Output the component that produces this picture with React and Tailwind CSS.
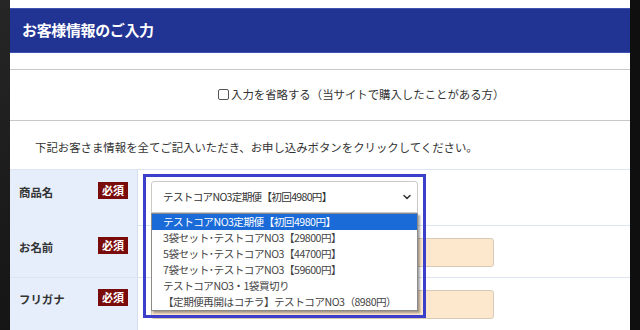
import React from "react";
import { ChevronDown } from "lucide-react";

const options = [
  "テストコアNO3定期便【初回4980円】",
  "3袋セット･テストコアNO3【29800円】",
  "5袋セット･テストコアNO3【44700円】",
  "7袋セット･テストコアNO3【59600円】",
  "テストコアNO3・1袋買切り",
  "【定期便再開はコチラ】テストコアNO3（8980円）",
];

function Badge() {
  return (
    <span className="inline-flex h-[17px] w-[30px] items-center justify-center bg-[#7a0b0b] text-[11px] font-bold leading-none text-white">
      必須
    </span>
  );
}

function LabelCell({ label, pt }) {
  return (
    <div className={`flex h-full items-start justify-between border-r border-[#d4deed] bg-[#e6eefb] pl-[9px] pr-[9px] ${pt}`}>
      <span className="mt-[2px] text-[11.4px] font-bold text-[#333]">{label}</span>
      <Badge />
    </div>
  );
}

function TextInput() {
  return <div className="h-[29px] w-[343px] rounded-[3px] border border-[#d6c9b6] bg-[#fde7cd]" />;
}

export default function App() {
  return (
    <div
      className="flex h-[330px] w-[640px] overflow-hidden bg-[#111]"
      style={{ fontFamily: '"Noto Sans CJK JP", "Noto Sans", sans-serif' }}
    >
      {/* left backdrop */}
      <div className="w-[10px] bg-gradient-to-b from-[#262626] to-[#151515]" />

      <div className="flex w-[620px] flex-col bg-white">
        <div className="h-[8px]" />

        {/* Header */}
        <div className="flex h-[46px] items-center border-y border-[#3d52b4] bg-[#213494] pl-[12px]">
          <h1 className="text-[15px] font-bold tracking-tight text-white">お客様情報のご入力</h1>
        </div>

        <div className="h-[17px] border-b border-[#c8c8c8]" />

        {/* Skip option */}
        <div className="flex h-[51px] items-center border-b border-[#c8c8c8] pl-[208px]">
          <label className="flex items-center text-[11.4px] text-[#333]">
            <span className="mr-[2px] h-[11px] w-[11px] rounded-[2px] border border-[#555] bg-white" />
            入力を省略する（当サイトで購入したことがある方）
          </label>
        </div>

        {/* Notice */}
        <div className="flex h-[49px] items-center pl-[25px] pt-[5px] text-[11.4px] text-[#333]">
          下記お客さま情報を全てご記入いただき、お申し込みボタンをクリックしてください。
        </div>

        {/* Form table */}
        <div className="grid grid-cols-[128px_1fr] border-t border-[#dbe4f0]">
          {/* 商品名 */}
          <div className="h-[56px]">
            <LabelCell label="商品名" pt="pt-[12px]" />
          </div>
          <div className="h-[56px] border-b border-[#dbe4f0] pl-[13px] pt-[11px]">
            <div className="relative w-[267px]">
              <div className="flex h-[32px] items-center justify-between rounded-t-[3px] border border-[#c9c9c9] bg-white pl-[11px] pr-[4px] text-[10.6px] tracking-[-0.7px] text-[#333] whitespace-nowrap">
                <span>{options[0]}</span>
                <ChevronDown className="h-[12px] w-[12px] text-[#333]" strokeWidth={3} />
              </div>
              <ul className="absolute left-0 top-full z-10 w-[267px] border border-[#8a8a8a] bg-white shadow-[2px_2px_2px_rgba(0,0,0,0.35)]">
                {options.map((o, i) => (
                  <li
                    key={o}
                    className={`flex h-[16px] items-center whitespace-nowrap pl-[11px] text-[10.6px] leading-none tracking-[-0.5px] ${
                      i === 0 ? "bg-[#1a6ad8] text-white" : "text-[#444]"
                    }`}
                  >
                    {o}
                  </li>
                ))}
              </ul>
              <div className="pointer-events-none absolute -left-[8px] -top-[7px] z-20 h-[144px] w-[283px] border-[3px] border-[#3b3fca]" />
            </div>
          </div>

          {/* お名前 */}
          <div className="h-[52px] border-b border-[#dbe4f0]">
            <LabelCell label="お名前" pt="pt-[11px]" />
          </div>
          <div className="h-[52px] border-b border-[#dbe4f0] pl-[13px] pt-[12px]">
            <TextInput />
          </div>

          {/* フリガナ */}
          <div className="h-[52px]">
            <LabelCell label="フリガナ" pt="pt-[11px]" />
          </div>
          <div className="h-[52px] pl-[13px] pt-[12px]">
            <TextInput />
          </div>
        </div>
      </div>

      {/* right backdrop */}
      <div className="w-[10px] bg-[#0f0f0f]" />
    </div>
  );
}
